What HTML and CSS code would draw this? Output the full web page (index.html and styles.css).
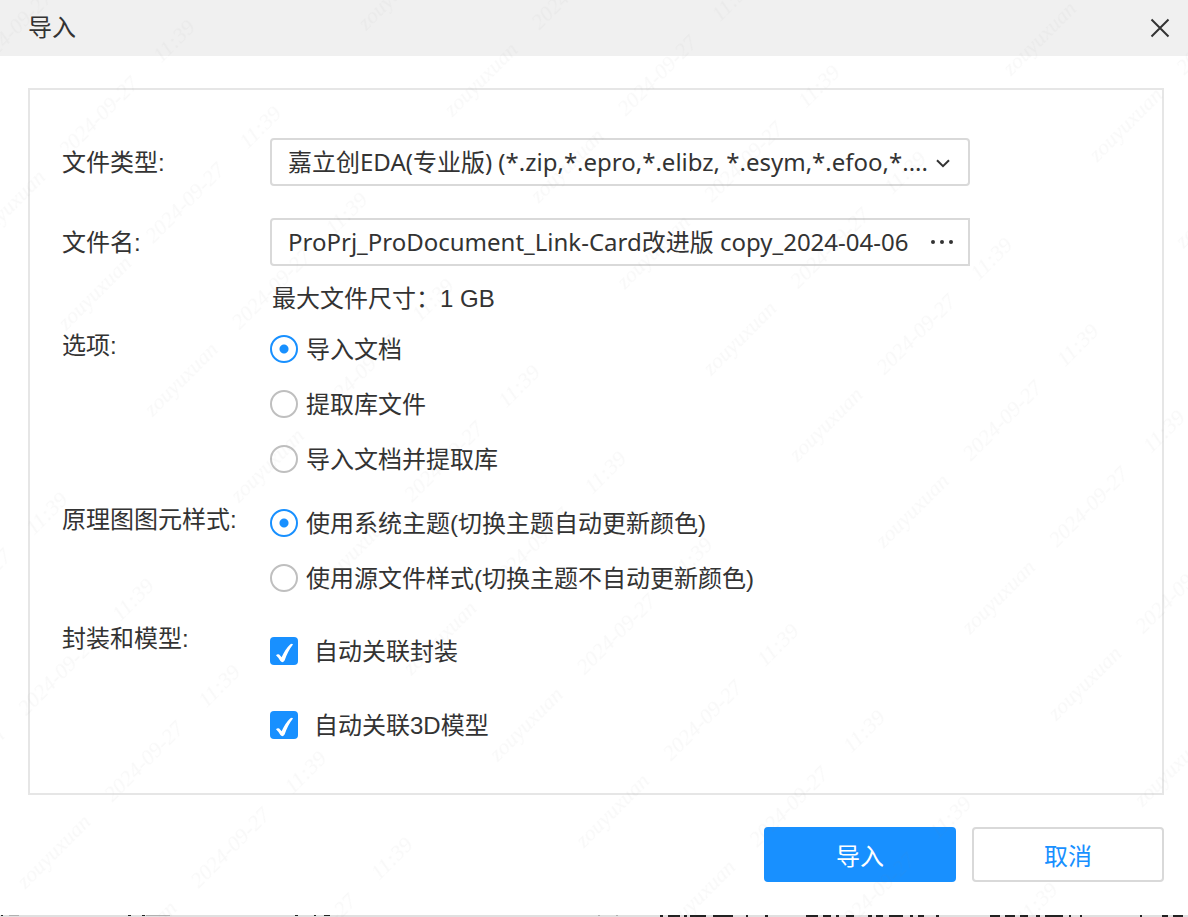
FILE: index.html
```html
<!DOCTYPE html>
<html lang="zh-CN">
<head>
<meta charset="utf-8">
<meta name="viewport" content="width=device-width, initial-scale=1">
<title>导入</title>
<link rel="stylesheet" href="styles.css">
</head>
<body>
<form class="dialog">
  <header class="titlebar">
    <h1 class="title">导入</h1>
    <button class="close" type="button" aria-label="关闭">
      <svg width="20" height="20" viewBox="0 0 20 20" fill="none" stroke="#333" stroke-width="2"><path d="M1.5 1.5 18.5 18.5M18.5 1.5 1.5 18.5"/></svg>
    </button>
  </header>

  <main class="panel">
    <div class="row">
      <label class="name" for="type">文件类型:</label>
      <div class="field">
        <select class="select" id="type">
          <option>嘉立创EDA(专业版) (*.zip,*.epro,*.elibz, *.esym,*.efoo,*....</option>
        </select>
        <svg class="chevron" width="14" height="9" viewBox="0 0 14 9" fill="none" stroke="#333" stroke-width="2"><path d="M1 1.2 7 7.2 13 1.2"/></svg>
      </div>
    </div>

    <div class="row row-file">
      <label class="name" for="file">文件名:</label>
      <div class="stack">
        <div class="field file">
          <input class="filename" id="file" type="text" value="ProPrj_ProDocument_Link-Card改进版 copy_2024-04-06">
          <button class="browse" type="button" aria-label="浏览">
            <svg width="22" height="4" viewBox="0 0 22 4" fill="#333"><circle cx="2" cy="2" r="2"/><circle cx="11" cy="2" r="2"/><circle cx="20" cy="2" r="2"/></svg>
          </button>
        </div>
        <p class="hint">最大文件尺寸：1 GB</p>
      </div>
    </div>

    <div class="row" role="radiogroup" aria-labelledby="g1">
      <span class="name" id="g1">选项:</span>
      <div class="stack">
        <label class="radio"><input type="radio" name="mode" checked><span class="caption">导入文档</span></label>
        <label class="radio"><input type="radio" name="mode"><span class="caption">提取库文件</span></label>
        <label class="radio"><input type="radio" name="mode"><span class="caption">导入文档并提取库</span></label>
      </div>
    </div>

    <div class="row" role="radiogroup" aria-labelledby="g2">
      <span class="name" id="g2">原理图图元样式:</span>
      <div class="stack">
        <label class="radio"><input type="radio" name="style" checked><span class="caption">使用系统主题(切换主题自动更新颜色)</span></label>
        <label class="radio"><input type="radio" name="style"><span class="caption">使用源文件样式(切换主题不自动更新颜色)</span></label>
      </div>
    </div>

    <div class="row" role="group" aria-labelledby="g3">
      <span class="name" id="g3">封装和模型:</span>
      <div class="stack">
        <label class="check"><span class="box"><input type="checkbox" checked><svg class="tick" width="28" height="28" viewBox="0 0 28 28" fill="#fff"><path d="M6 18.2Q7.4 16.6 9.2 17.4L11.6 20.2Q15.6 11.6 20.4 7.2 22 6.2 23 7.4 18 13.6 14.6 23.4 12.6 26.6 10.4 24Q8.4 20.4 6 18.2Z"/></svg></span><span class="caption">自动关联封装</span></label>
        <label class="check"><span class="box"><input type="checkbox" checked><svg class="tick" width="28" height="28" viewBox="0 0 28 28" fill="#fff"><path d="M6 18.2Q7.4 16.6 9.2 17.4L11.6 20.2Q15.6 11.6 20.4 7.2 22 6.2 23 7.4 18 13.6 14.6 23.4 12.6 26.6 10.4 24Q8.4 20.4 6 18.2Z"/></svg></span><span class="caption">自动关联3D模型</span></label>
      </div>
    </div>
  </main>

  <footer class="actions">
    <button class="btn primary" type="submit">导入</button>
    <button class="btn" type="button">取消</button>
  </footer>
</form>

<svg class="backdrop" height="2" aria-hidden="true">
  <rect width="100%" height="2" fill="#e0e0e0"/>
  <path stroke="#b0b0b0" stroke-width="1" d="M9 .5h10M146 .5h24M598 .5h2M616 .5h2"/>
  <path stroke="#222" stroke-width="1" d="M1 .5h2M128 .5h3M142 .5h3M295 .5h3M314 .5h2M324 .5h6"/>
  <path stroke="#222" stroke-width="2" d="M660 1h3M668 1h12M684 1h3M690 1h16M713 1h20M746 1h2M765 1h3M806 1h12M823 1h8M836 1h3M846 1h8M868 1h4M876 1h7M889 1h14M910 1h3M918 1h6M936 1h3M990 1h10M1005 1h10M1020 1h8M1036 1h4M1045 1h18M1069 1h2M1080 1h2M1140 1h2M1162 1h6M1173 1h10"/>
</svg>

<svg class="watermark" aria-hidden="true">
  <defs>
    <pattern id="mark" x="232" y="4" width="424" height="122" patternUnits="userSpaceOnUse" patternTransform="rotate(-45)">
      <text x="5" y="33">zouyuxuan</text>
      <text x="128" y="33">2024-09-27</text>
      <text x="261" y="33">11:39</text>
    </pattern>
  </defs>
  <rect width="100%" height="100%" fill="url(#mark)"/>
</svg>
</body>
</html>
```
FILE: styles.css
```css
* {
  box-sizing: border-box;
}

body {
  position: relative;
  display: flex;
  flex-direction: column;
  min-height: 100vh;
  margin: 0;
  overflow-x: hidden;
  background: #fff;
  color: #333;
  font: 24px/36px "Liberation Sans", "Noto Sans CJK SC", sans-serif;
}

button,
input,
select {
  margin: 0;
  color: inherit;
  font: inherit;
}

.dialog {
  flex: 1;
}

.titlebar {
  display: flex;
  align-items: center;
  justify-content: space-between;
  height: 56px;
  padding: 0 18px 0 28px;
  background: #f0f0f0;
}

.title {
  margin: 0;
  font-size: 24px;
  font-weight: 400;
}

.close,
.browse {
  display: flex;
  padding: 0;
  border: 0;
  background: none;
}

.panel {
  display: flex;
  flex-direction: column;
  gap: 9px;
  margin: 32px 24px 32px 28px;
  padding: 48px 32px 31px;
  border: 2px solid #e6e6e6;
}

.row {
  display: grid;
  grid-template-columns: 208px minmax(0, 700px);
}

.row-file {
  margin: 21px 0 -5px;
}

.name {
  line-height: 50px;
  white-space: nowrap;
}

.stack {
  display: flex;
  flex-direction: column;
}

.field {
  position: relative;
  height: 48px;
  font-family: "Noto Sans", "Noto Sans CJK SC", sans-serif;
}

.select {
  width: 100%;
  height: 100%;
  padding: 0 36px 0 16px;
  appearance: none;
  border: 2px solid #d9d9d9;
  border-radius: 4px;
  background: #fff;
}

.chevron {
  position: absolute;
  top: 21px;
  right: 20px;
  pointer-events: none;
}

.file {
  display: flex;
  align-items: center;
  gap: 6px;
  padding: 0 15px 0 16px;
  border: 2px solid #d9d9d9;
  border-radius: 4px 0 0 4px;
}

.filename {
  flex: 1;
  min-width: 0;
  padding: 0;
  border: 0;
  outline: 0;
  background: none;
}

.hint {
  margin: 15px 0 0 2px;
}

.radio,
.check {
  display: flex;
  align-items: center;
  height: 55px;
  gap: 8px;
}

.radio input {
  width: 28px;
  height: 28px;
  appearance: none;
  border: 2px solid #bfbfbf;
  border-radius: 50%;
  background: #fff;
}

.radio input:checked {
  border-color: #1890ff;
  background: radial-gradient(circle, #1890ff 4px, #fff 5px);
}

.caption {
  padding-top: 2px;
}

.check {
  height: 74px;
  gap: 16px;
}

.box {
  position: relative;
  display: flex;
}

.box input {
  width: 28px;
  height: 28px;
  appearance: none;
  border-radius: 4px;
  background: #1890ff;
}

.tick {
  position: absolute;
  inset: 0;
  pointer-events: none;
}

.actions {
  display: flex;
  justify-content: flex-end;
  gap: 16px;
  padding: 0 24px 32px;
}

.btn {
  width: 192px;
  height: 55px;
  padding: 4px 0 0;
  border: 2px solid #d9d9d9;
  border-radius: 4px;
  background: #fff;
  color: #1890ff;
}

.primary {
  border-color: #1890ff;
  background: #1890ff;
  color: #fff;
}

.backdrop {
  display: block;
  width: 100%;
}

.watermark {
  position: absolute;
  inset: 0;
  width: 100%;
  height: 100%;
  pointer-events: none;
}

.watermark text {
  fill: #808080;
  fill-opacity: 0.05;
  font: italic 22px "Liberation Serif", serif;
}
```
